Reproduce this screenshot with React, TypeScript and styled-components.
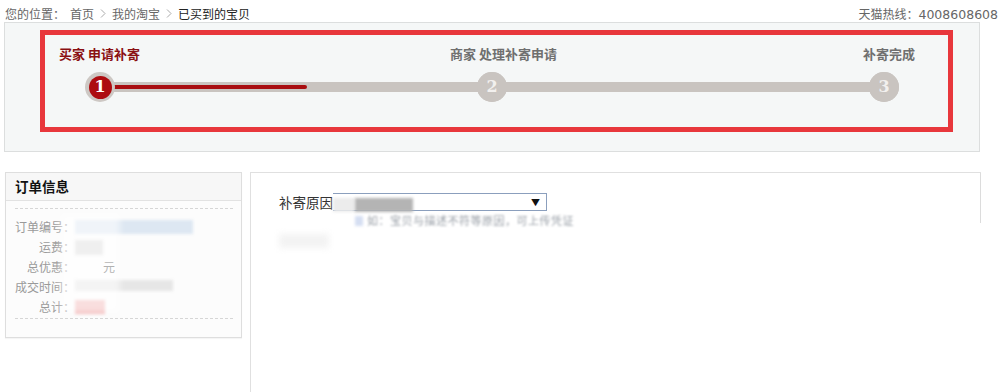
import React from "react";
import styled, { createGlobalStyle } from "styled-components";

const Global = createGlobalStyle`
  html, body { margin: 0; padding: 0; background: #fff; }
  body { font-family: "Noto Sans CJK SC", "Noto Sans", sans-serif; font-size: 12px; color: #333; }
`;

const Page = styled.div`
  width: 1000px;
  height: 392px;
  overflow: hidden;
`;

const TopBar = styled.div`
  height: 22px;
  box-sizing: border-box;
  padding: 5px 2px 0 5px;
  display: flex;
  justify-content: space-between;
  line-height: 17px;
  font-size: 12px;
  color: #666;
`;

const Crumbs = styled.div`
  display: flex;
  align-items: center;
`;

const Crumb = styled.span<{ $current?: boolean; $gap?: number }>`
  color: ${(p) => (p.$current ? "#222" : "#666")};
  margin-left: ${(p) => p.$gap ?? 0}px;
`;

const Sep = styled.svg`
  margin: 0 6px;
  width: 6px;
  height: 9px;
`;

const Hotline = styled.div`
  color: #666;
  span {
    font-family: "DejaVu Sans", sans-serif;
    font-size: 12.5px;
  }
`;

const ProgressPanel = styled.div`
  margin: 0 20px 0 4px;
  height: 130px;
  box-sizing: border-box;
  border: 1px solid #dcdede;
  background: #f5f7f7;
  padding: 7px 26px 0 35px;
`;

const RedFrame = styled.div`
  height: 102px;
  box-sizing: border-box;
  border: 5px solid #e8373c;
  padding-top: 11px;
`;

const LabelRow = styled.div`
  display: grid;
  grid-template-columns: 391px 413px auto;
  padding-left: 14px;
`;

const StepLabel = styled.div<{ $active?: boolean }>`
  font-size: 13px;
  line-height: 16px;
  font-weight: 700;
  color: ${(p) => (p.$active ? "#8a0f12" : "#6f6f6f")};
  white-space: nowrap;
`;

const Track = styled.div`
  margin: 10px 49px 0 40px;
  display: flex;
  align-items: center;
  height: 30px;
`;

const Circle = styled.div<{ $active?: boolean }>`
  width: 30px;
  height: 30px;
  border-radius: 50%;
  background: ${(p) => (p.$active ? "#cdc8c4" : "#c9c4c0")};
  display: flex;
  align-items: center;
  justify-content: center;
  flex: none;
  position: relative;
  z-index: 1;
`;

const CircleInner = styled.div<{ $active?: boolean }>`
  width: ${(p) => (p.$active ? "23px" : "30px")};
  height: ${(p) => (p.$active ? "23px" : "30px")};
  border-radius: 50%;
  background: ${(p) => (p.$active ? "#ad0c10" : "#c9c4c0")};
  color: ${(p) => (p.$active ? "#fff" : "#f2f0ee")};
  font-family: "DejaVu Serif", "Liberation Serif", serif;
  font-weight: 700;
  font-size: 16px;
  line-height: 1;
  display: flex;
  align-items: center;
  justify-content: center;
`;

const Segment = styled.div`
  flex: 1;
  height: 10px;
  margin: 0 -4px;
  background: #c9c4c0;
  display: flex;
  align-items: center;
`;

const SegmentFill = styled.div<{ $pct: number }>`
  width: ${(p) => p.$pct}%;
  height: 4px;
  border-radius: 0 2px 2px 0;
  background: #a80d10;
`;

const Main = styled.div`
  margin-top: 20px;
  display: flex;
  align-items: flex-start;
`;

const InfoBox = styled.div`
  margin-left: 5px;
  width: 237px;
  height: 166px;
  box-sizing: border-box;
  border: 1px solid #dedede;
  background: #fcfcfc;
  box-shadow: 0 1px 1px rgba(0, 0, 0, 0.04);
`;

const InfoHeader = styled.div`
  height: 28px;
  box-sizing: border-box;
  border-bottom: 1px solid #e2e2e2;
  background: #f7f7f7;
  padding-left: 9px;
  line-height: 27px;
  font-size: 13.5px;
  font-weight: 700;
  color: #111;
`;

const InfoBody = styled.div`
  padding: 7px 8px 0 9px;
`;

const Dotted = styled.div`
  border-top: 1px dashed #d6d6d6;
`;

const Rows = styled.div`
  padding: 8px 0 1px 0;
  position: relative;
`;

const Row = styled.div`
  display: flex;
  line-height: 20px;
  height: 20px;
`;

const RowLabel = styled.span`
  width: 60px;
  text-align: right;
  color: #9a9a9a;
  font-size: 12px;
`;

const Blur = styled.span<{ $w: number; $c: string; $h?: number }>`
  display: inline-block;
  width: ${(p) => p.$w}px;
  height: ${(p) => p.$h ?? 14}px;
  margin-top: 3px;
  background: ${(p) => p.$c};
  filter: blur(1.5px);
`;

const Yuan = styled.span`
  margin-left: 28px;
  color: #555;
  font-size: 12px;
`;

const Veil = styled.div`
  position: absolute;
  left: 45px;
  top: 4px;
  width: 60px;
  height: 100px;
  background: rgba(255, 255, 255, 0.55);
  filter: blur(3px);
`;

const FormPanel = styled.div`
  margin-left: 8px;
  width: 731px;
  height: 240px;
  box-sizing: border-box;
  border: 1px solid #e0e0e0;
  border-right: none;
  border-bottom: none;
  background: linear-gradient(#dcdcdc, #dcdcdc) right top / 1px 50px no-repeat, #fff;
  padding: 20px 0 0 28px;
`;

const FieldRow = styled.div`
  display: flex;
  align-items: center;
`;

const FieldLabel = styled.span`
  font-size: 13.5px;
  color: #333;
  line-height: 18px;
  white-space: nowrap;
`;

const Select = styled.div`
  width: 214px;
  height: 18px;
  box-sizing: border-box;
  border: 1px solid #8b9fbd;
  border-left: none;
  background: #fff;
  display: flex;
  align-items: center;
  justify-content: space-between;
  padding-right: 6px;
`;

const SelectBlur = styled.div`
  display: flex;
  height: 14px;
`;

const Arrow = styled.span`
  font-size: 9px;
  color: #111;
  line-height: 1;
`;

const Hint = styled.div`
  margin: 2px 0 0 76px;
  display: flex;
  align-items: center;
  gap: 4px;
`;

const HintText = styled.span`
  font-size: 11px;
  color: #9aa0a8;
  line-height: 12px;
  filter: blur(1px);
  letter-spacing: 0.5px;
`;

const Faint = styled.div`
  margin-top: 8px;
  width: 50px;
  height: 14px;
  background: #f3f3f3;
  filter: blur(3px);
`;

function Chevron() {
  return (
    <Sep viewBox="0 0 6 9">
      <path d="M1 0.5 L5 4.5 L1 8.5" fill="none" stroke="#aaa" strokeWidth="1" />
    </Sep>
  );
}

export default function App() {
  return (
    <Page>
      <Global />
      <TopBar>
        <Crumbs>
          <Crumb>您的位置：</Crumb>
          <Crumb $gap={5}>首页</Crumb>
          <Chevron />
          <Crumb>我的淘宝</Crumb>
          <Chevron />
          <Crumb $current>已买到的宝贝</Crumb>
        </Crumbs>
        <Hotline>
          天猫热线：<span>4008608608</span>
        </Hotline>
      </TopBar>

      <ProgressPanel>
        <RedFrame>
          <LabelRow>
            <StepLabel $active>买家 申请补寄</StepLabel>
            <StepLabel>商家 处理补寄申请</StepLabel>
            <StepLabel>补寄完成</StepLabel>
          </LabelRow>
          <Track>
            <Circle $active>
              <CircleInner $active>1</CircleInner>
            </Circle>
            <Segment>
              <SegmentFill $pct={53} />
            </Segment>
            <Circle>
              <CircleInner>2</CircleInner>
            </Circle>
            <Segment />
            <Circle>
              <CircleInner>3</CircleInner>
            </Circle>
          </Track>
        </RedFrame>
      </ProgressPanel>

      <Main>
        <InfoBox>
          <InfoHeader>订单信息</InfoHeader>
          <InfoBody>
            <Dotted />
            <Rows>
              <Row>
                <RowLabel>订单编号：</RowLabel>
                <Blur $w={118} $c="#dde7f2" />
              </Row>
              <Row>
                <RowLabel>运费：</RowLabel>
                <Blur $w={28} $c="#dcdcdc" $h={15} />
              </Row>
              <Row>
                <RowLabel>总优惠：</RowLabel>
                <Yuan>元</Yuan>
              </Row>
              <Row>
                <RowLabel>成交时间：</RowLabel>
                <Blur $w={98} $c="#e6e6e6" $h={11} />
              </Row>
              <Row>
                <RowLabel>总计：</RowLabel>
                <Blur $w={30} $c="#f2b6b6" />
              </Row>
              <Veil />
            </Rows>
            <Dotted />
          </InfoBody>
        </InfoBox>

        <FormPanel>
          <FieldRow>
            <FieldLabel>补寄原因</FieldLabel>
            <Select>
              <SelectBlur>
                <Blur $w={22} $c="#ececec" />
                <Blur $w={58} $c="#b4b4b4" />
              </SelectBlur>
              <Arrow>▼</Arrow>
            </Select>
          </FieldRow>
          <Hint>
            <Blur $w={8} $c="#d5def2" $h={10} />
            <HintText>如：宝贝与描述不符等原因，可上传凭证</HintText>
          </Hint>
          <Faint />
        </FormPanel>
      </Main>
    </Page>
  );
}
